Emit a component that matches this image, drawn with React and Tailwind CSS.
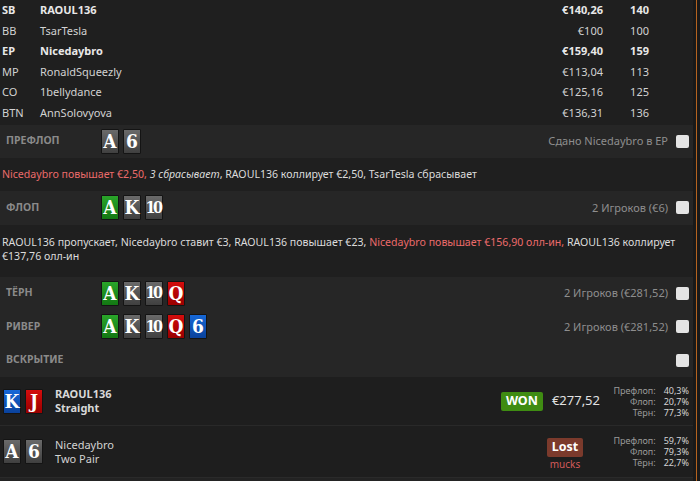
import React from "react";

const PLAYERS = [
  { pos: "SB", name: "RAOUL136", amt: "€140,26", bb: "140", bold: true },
  { pos: "BB", name: "TsarTesla", amt: "€100", bb: "100" },
  { pos: "EP", name: "Nicedaybro", amt: "€159,40", bb: "159", bold: true },
  { pos: "MP", name: "RonaldSqueezly", amt: "€113,04", bb: "113" },
  { pos: "CO", name: "1bellydance", amt: "€125,16", bb: "125" },
  { pos: "BTN", name: "AnnSolovyova", amt: "€136,31", bb: "136" },
];

const CARD_BG = {
  gray: "bg-gradient-to-b from-[#6a6a6a] to-[#404040]",
  green: "bg-gradient-to-b from-[#2aa52a] to-[#137813]",
  red: "bg-gradient-to-b from-[#d40d0d] to-[#990000]",
  blue: "bg-gradient-to-b from-[#1668d8] to-[#0a429c]",
};

function Card({ v, c = "gray" }) {
  const ten = v === "10";
  return (
    <div
      className={`flex h-[25px] w-[18px] items-center justify-center rounded-[1px] border border-[#141414] ${CARD_BG[c]} font-['DejaVu_Serif',serif] font-stretch-condensed font-bold leading-none text-white ${
        ten ? "text-[16px] tracking-[-2.5px] pr-[2px]" : "text-[19px]"
      }`}
    >
      {v}
    </div>
  );
}

function Cards({ list }) {
  return (
    <div className="flex gap-[4px]">
      {list.map((c, i) => (
        <Card key={i} v={c[0]} c={c[1]} />
      ))}
    </div>
  );
}

function Check() {
  return <div className="h-[13px] w-[13px] rounded-[2px] bg-[#e4e4e4]" />;
}

function Street({ label, cards, info }) {
  return (
    <div className="flex h-[33.5px] items-center bg-[#262626] pl-[6px] pr-[4px]">
      <div className="w-[95px] text-[10.5px] font-bold uppercase text-[#8a8a8a]">
        {label}
      </div>
      <div className="flex-1">{cards && <Cards list={cards} />}</div>
      {info && <div className="mr-[8px] text-[11px] text-[#8e8e8e]">{info}</div>}
      <Check />
    </div>
  );
}

function Stats({ rows }) {
  return (
    <div className="ml-[11px] grid w-[78px] grid-cols-[1fr_auto] gap-x-[8px] text-[9px] leading-[11px]">
      {rows.map(([l, v]) => (
        <React.Fragment key={l}>
          <div className="text-right text-[#9a9a9a]">{l}</div>
          <div className="text-right text-[#d4d4d4]">{v}</div>
        </React.Fragment>
      ))}
    </div>
  );
}

export default function App() {
  return (
    <div className="flex h-[481px] w-[700px] overflow-hidden bg-[#1c1c1c] font-['Noto_Sans','Open_Sans',sans-serif] text-[11px] text-[#dcdcdc]">
      <div className="w-[693px] bg-[#1f1f1f]">
        {/* Players */}
        <div className="pb-[1px]">
          {PLAYERS.map((p) => (
            <div
              key={p.pos}
              className={`flex h-[20.6px] items-center pr-[44px] ${
                p.bold ? "font-bold text-[#e8e8e8]" : "text-[#d2d2d2]"
              }`}
            >
              <div className="w-[40px] pl-[2px]">{p.pos}</div>
              <div className="flex-1">{p.name}</div>
              <div className="w-[80px] text-right">{p.amt}</div>
              <div className="w-[46px] text-right">{p.bb}</div>
            </div>
          ))}
        </div>

        <Street
          label="Префлоп"
          cards={[["A"], ["6"]]}
          info="Сдано Nicedaybro в EP"
        />
        <div className="flex h-[33px] items-center px-[2px] text-[10.6px]">
          <span className="text-[#ec6b6b]">Nicedaybro повышает €2,50,&nbsp;</span>
          <span className="italic">3 сбрасывает</span>
          <span>, RAOUL136 коллирует €2,50, TsarTesla сбрасывает</span>
        </div>

        <Street
          label="Флоп"
          cards={[["A", "green"], ["K"], ["10"]]}
          info="2 Игроков (€6)"
        />
        <div className="h-[52px] px-[2px] pt-[10px] text-[10.6px] leading-[14px]">
          <div className="whitespace-nowrap">
            RAOUL136 пропускает, Nicedaybro ставит €3, RAOUL136 повышает €23,{" "}
            <span className="text-[#ec6b6b]">Nicedaybro повышает €156,90 олл-ин,</span>{" "}
            RAOUL136 коллирует
          </div>
          <div>€137,76 олл-ин</div>
        </div>

        <Street
          label="Тёрн"
          cards={[["A", "green"], ["K"], ["10"], ["Q", "red"]]}
          info="2 Игроков (€281,52)"
        />
        <Street
          label="Ривер"
          cards={[["A", "green"], ["K"], ["10"], ["Q", "red"], ["6", "blue"]]}
          info="2 Игроков (€281,52)"
        />
        <Street label="Вскрытие" />

        {/* Showdown */}
        <div className="flex h-[48px] items-center bg-[#1e1e1e] pl-[3px] pr-[4px]">
          <Cards list={[["K", "blue"], ["J", "red"]]} />
          <div className="ml-[12px] flex-1 font-bold leading-[14px] text-[#d8d8d8]">
            <div>RAOUL136</div>
            <div>Straight</div>
          </div>
          <div className="flex items-center">
            <div className="flex h-[19px] w-[42px] items-center justify-center rounded-[2px] bg-[#3f8c12] text-[12.5px] font-bold text-white">
              WON
            </div>
            <div className="ml-[9px] text-[13px] text-[#e2e2e2]">€277,52</div>
          </div>
          <Stats
            rows={[
              ["Префлоп:", "40,3%"],
              ["Флоп:", "20,7%"],
              ["Тёрн:", "77,3%"],
            ]}
          />
        </div>
        <div className="flex h-[52px] items-center border-t border-[#292929] bg-[#1e1e1e] pl-[3px] pr-[4px]">
          <Cards list={[["A"], ["6"]]} />
          <div className="ml-[12px] flex-1 leading-[14px] text-[#d2d2d2]">
            <div>Nicedaybro</div>
            <div>Two Pair</div>
          </div>
          <div className="mr-[17px] flex flex-col items-center pt-[6px]">
            <div className="flex h-[19px] w-[36px] items-center justify-center rounded-[2px] bg-[#7b3a2c] text-[12.5px] font-bold text-white">
              Lost
            </div>
            <div className="text-[10px] leading-[14px] text-[#d25a5a]">mucks</div>
          </div>
          <Stats
            rows={[
              ["Префлоп:", "59,7%"],
              ["Флоп:", "79,3%"],
              ["Тёрн:", "22,7%"],
            ]}
          />
        </div>
        <div className="h-[4px] border-t border-[#2a2a2a] bg-[#232323]" />
      </div>

      {/* right scroll edge */}
      <div className="flex w-[7px] bg-[#191919]">
        <div className="ml-[3px] w-[1px] bg-[#b5631f]" />
      </div>
    </div>
  );
}
